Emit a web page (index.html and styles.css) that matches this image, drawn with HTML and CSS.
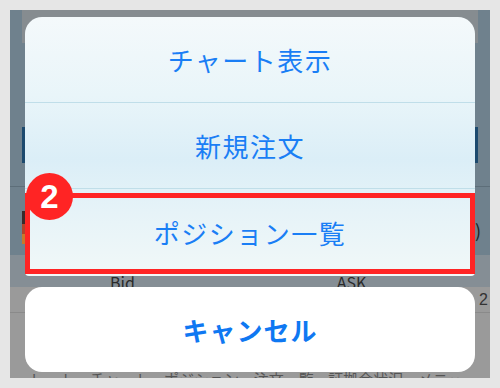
FILE: index.html
```html
<!DOCTYPE html>
<html lang="ja">
<head>
  <meta charset="UTF-8">
  <meta name="viewport" content="width=device-width, initial-scale=1.0">
  <title>ポジション一覧</title>
  <link rel="stylesheet" href="styles.css">
</head>
<body>
  <main class="frame">
    <div class="app">
      <div class="app-head"></div>
      <div class="app-body">
        <div class="app-block">
          <span class="mark mark-left"></span>
          <span class="mark mark-right"></span>
        </div>
        <div class="app-block app-block-low">
          <span class="flag"></span>
          <span class="paren">)</span>
        </div>
      </div>
      <div class="price-row">
        <span>Bid</span>
        <span>ASK</span>
      </div>
      <div class="tabs-area">
        <div class="tabs-top"><span class="count">2</span></div>
        <nav class="tabs">
          <span>レート</span>
          <span>チャート</span>
          <span>ポジション</span>
          <span>注文一覧</span>
          <span>証拠金状況</span>
          <span>メニュー</span>
        </nav>
      </div>
    </div>

    <div class="action-sheet">
      <div class="sheet">
        <button class="item">チャート表示</button>
        <button class="item">新規注文</button>
        <div class="item-wrap">
          <button class="item item-last">ポジション一覧</button>
          <span class="highlight"></span>
          <span class="badge">2</span>
        </div>
      </div>
      <button class="cancel">キャンセル</button>
    </div>
  </main>
</body>
</html>
```

FILE: styles.css
```css
* {
  box-sizing: border-box;
  font-family: "Noto Sans CJK JP", "Noto Sans", sans-serif;
}
body {
  margin: 0;
  background: #e6e6e6;
}

.frame {
  position: relative;
  margin: 10px;
  width: 480px;
  height: 368px;
  overflow: hidden;
}

/* dimmed app behind the sheet */
.app {
  display: flex;
  flex-direction: column;
  height: 100%;
  background: #6f818d;
}
.app-head {
  height: 33px;
  margin-left: 12px;
  margin-right: 12px;
  background: #868c90;
}
.app-body {
  display: flex;
  flex-direction: column;
  height: 212px;
}
.app-block {
  position: relative;
  height: 144px;
  border-bottom: 1px solid #5d6e79;
}
.app-block-low {
  height: 68px;
  border-bottom: none;
}
.mark {
  position: absolute;
  top: 84px;
  width: 3px;
  height: 36px;
  background: #1c4a6e;
}
.mark-left { left: 12px; }
.mark-right { right: 12px; }
.flag {
  position: absolute;
  left: 12px;
  top: 24px;
  width: 3px;
  height: 33px;
  background: linear-gradient(#3a2a2a 0 40%, #b0442a 40% 70%, #c9782a 70%);
}
.paren {
  position: absolute;
  right: 9px;
  top: 34px;
  font-size: 18px;
  color: #222;
  line-height: 1;
}

.price-row {
  display: flex;
  align-items: flex-end;
  height: 32px;
  padding: 0 0 0 100px;
  gap: 202px;
  background: #858e95;
  font-family: "Liberation Sans", sans-serif;
  font-size: 16px;
  color: #2a2a2a;
  line-height: 1;
}
.price-row span {
  margin-bottom: -3px;
}

.tabs-area {
  flex: 1;
  display: flex;
  flex-direction: column;
  background: #9a9a9a;
}
.tabs-top {
  display: flex;
  justify-content: flex-end;
  height: 26px;
  border-bottom: 1px solid #8a8a8a;
  padding-right: 2px;
}
.count {
  font-family: "Liberation Sans", sans-serif;
  font-size: 16px;
  color: #333;
  line-height: 26px;
}
.tabs {
  display: flex;
  justify-content: space-between;
  margin-top: auto;
  margin-bottom: -10px;
  padding: 0 12px 0 20px;
  font-size: 15px;
  color: #555;
  line-height: 18px;
}

/* action sheet overlay */
.action-sheet {
  position: absolute;
  inset: 0;
  display: flex;
  flex-direction: column;
  gap: 11px;
  padding: 7px 15px 6px;
}
.sheet {
  display: flex;
  flex-direction: column;
  border-radius: 17px 17px 4px 4px;
  background: linear-gradient(#f4f9fb 0%, #e9f5f9 30%, #dbeef7 55%, #e6f3f8 75%, #f1f8f8 100%);
}
button {
  border: none;
  margin: 0;
  padding: 0;
  background: none;
  cursor: pointer;
}
.item {
  height: 86px;
  border-bottom: 1px solid #c0dee9;
  font-size: 26px;
  letter-spacing: 1.5px;
  color: #1a7ef5;
}
.item-wrap {
  position: relative;
  display: flex;
  flex-direction: column;
}
.item-last {
  height: 87px;
  border-bottom: none;
}
.highlight {
  position: absolute;
  left: 0;
  right: 0;
  top: 4px;
  bottom: 2px;
  border: 5px solid #ff2424;
}
.badge {
  position: absolute;
  left: 1px;
  top: -16px;
  width: 47px;
  height: 47px;
  border-radius: 50%;
  background: #ff2424;
  color: #fff;
  font-family: "Liberation Sans", sans-serif;
  font-weight: 700;
  font-size: 33px;
  line-height: 1;
  display: flex;
  align-items: center;
  justify-content: center;
}
.cancel {
  flex: 1;
  border-radius: 17px;
  background: #fff;
  font-size: 26px;
  font-weight: 700;
  letter-spacing: 1px;
  color: #0f78f2;
}
```
